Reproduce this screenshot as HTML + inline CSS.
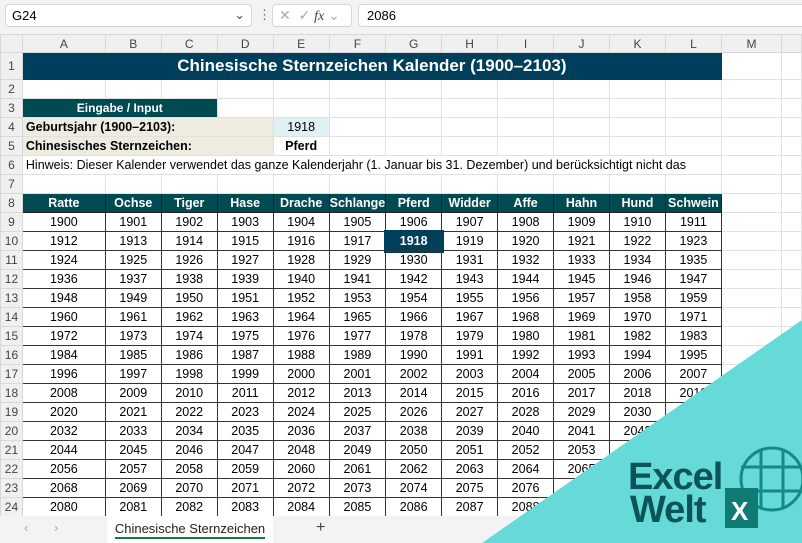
<!DOCTYPE html>
<html><head><meta charset="utf-8"><style>
*{margin:0;padding:0;box-sizing:border-box}
body{width:802px;height:543px;overflow:hidden;background:#fff;font-family:"Liberation Sans",Arial,sans-serif;position:relative}
.top{position:absolute;left:0;top:0;width:802px;height:34px;background:#f3f3f3}
.nb{position:absolute;left:5px;top:4px;width:247px;height:23px;background:#fff;border:1px solid #d6d6d6;border-radius:4px;font-size:13px;padding:3px 6px}
.fx{position:absolute;left:272px;top:4px;width:80px;height:23px;background:#fff;border:1px solid #d6d6d6;border-radius:4px;color:#aaa;font-size:14px;padding:2px 6px}
.fb{position:absolute;left:358px;top:4px;width:450px;height:23px;background:#fff;border:1px solid #d6d6d6;border-radius:4px;font-size:13px;padding:3px 8px}
table{position:absolute;left:0;top:34px;border-collapse:collapse;table-layout:fixed;font-size:12.5px}
td{height:19px;border:1px solid #e1e1e1;text-align:center;white-space:nowrap;overflow:visible;padding:0}
tr.h td{height:18px;background:#f0f0f0;color:#444;font-size:12px;border-color:#d8d8d8}
td.r{background:#f0f0f0;color:#444;font-size:12px;border-color:#d8d8d8;text-align:center}
tr.t td.ti{height:27px;background:#003f5c;color:#fff;font-weight:bold;font-size:17px;border:1px solid #003f5c}
.in{background:#004a52;color:#fff;font-weight:bold;font-size:12px}
.bg{background:#eeece1;font-weight:bold;text-align:left;padding-left:3px}
.lb{background:#dff1f2}
tr.k td.c{background:#004a52;color:#fff;font-weight:bold;border:1px solid #222}
tr.d td.c{border:1px solid #333}
td.sel{background:#003f5c!important;color:#fff;font-weight:bold;outline:2px solid #003f5c}
.tabs{position:absolute;left:0;top:516px;width:802px;height:27px;background:#f3f3f3;font-size:13px}
.tab{position:absolute;left:107px;top:0;width:166px;height:27px;background:#fff;text-align:center;padding-top:5px;color:#222}
.tab:after{content:"";position:absolute;left:8px;right:8px;bottom:4px;height:2px;background:#1a7a3c}
</style></head><body>
<div class="top">
<div class="nb">G24<span style="position:absolute;right:6px;top:2px;color:#555">⌄</span></div>
<div style="position:absolute;left:258px;top:7px;color:#666;font-size:13px">⋮</div>
<div class="fx">✕ &nbsp;✓ <i style="font-family:'Liberation Serif';color:#444">fx</i> ⌄</div>
<div class="fb">2086</div>
</div>
<table>
<colgroup><col style="width:22px"><col style="width:83px"><col span="11" style="width:56px"><col style="width:61px"><col style="width:20px"></colgroup>
<tr class="h"><td></td><td>A</td><td>B</td><td>C</td><td>D</td><td>E</td><td>F</td><td>G</td><td>H</td><td>I</td><td>J</td><td>K</td><td>L</td><td>M</td><td></td></tr>
<tr class="t"><td class="r">1</td><td class="ti" colspan="12">Chinesische Sternzeichen Kalender (1900–2103)</td><td></td><td></td></tr>
<tr><td class="r">2</td><td></td><td></td><td></td><td></td><td></td><td></td><td></td><td></td><td></td><td></td><td></td><td></td><td></td><td></td></tr>
<tr><td class="r">3</td><td class="in" colspan="3">Eingabe / Input</td><td></td><td></td><td></td><td></td><td></td><td></td><td></td><td></td><td></td><td></td><td></td></tr>
<tr><td class="r">4</td><td class="bg" colspan="4">Geburtsjahr (1900–2103):</td><td class="lb">1918</td><td></td><td></td><td></td><td></td><td></td><td></td><td></td><td></td><td></td></tr>
<tr><td class="r">5</td><td class="bg" colspan="4">Chinesisches Sternzeichen:</td><td style="font-weight:bold">Pferd</td><td></td><td></td><td></td><td></td><td></td><td></td><td></td><td></td><td></td></tr>
<tr><td class="r">6</td><td colspan="12" style="text-align:left;padding-left:3px;border-color:#e1e1e1">Hinweis: Dieser Kalender verwendet das ganze Kalenderjahr (1. Januar bis 31. Dezember) und berücksichtigt nicht das</td><td></td><td></td></tr>
<tr><td class="r">7</td><td></td><td></td><td></td><td></td><td></td><td></td><td></td><td></td><td></td><td></td><td></td><td></td><td></td><td></td></tr>
<tr class="k"><td class="r">8</td><td class="c">Ratte</td><td class="c">Ochse</td><td class="c">Tiger</td><td class="c">Hase</td><td class="c">Drache</td><td class="c">Schlange</td><td class="c">Pferd</td><td class="c">Widder</td><td class="c">Affe</td><td class="c">Hahn</td><td class="c">Hund</td><td class="c">Schwein</td><td></td><td></td></tr>
<tr class="d"><td class="r">9</td><td class="c">1900</td><td class="c">1901</td><td class="c">1902</td><td class="c">1903</td><td class="c">1904</td><td class="c">1905</td><td class="c">1906</td><td class="c">1907</td><td class="c">1908</td><td class="c">1909</td><td class="c">1910</td><td class="c">1911</td><td></td><td></td></tr>
<tr class="d"><td class="r">10</td><td class="c">1912</td><td class="c">1913</td><td class="c">1914</td><td class="c">1915</td><td class="c">1916</td><td class="c">1917</td><td class="c sel">1918</td><td class="c">1919</td><td class="c">1920</td><td class="c">1921</td><td class="c">1922</td><td class="c">1923</td><td></td><td></td></tr>
<tr class="d"><td class="r">11</td><td class="c">1924</td><td class="c">1925</td><td class="c">1926</td><td class="c">1927</td><td class="c">1928</td><td class="c">1929</td><td class="c">1930</td><td class="c">1931</td><td class="c">1932</td><td class="c">1933</td><td class="c">1934</td><td class="c">1935</td><td></td><td></td></tr>
<tr class="d"><td class="r">12</td><td class="c">1936</td><td class="c">1937</td><td class="c">1938</td><td class="c">1939</td><td class="c">1940</td><td class="c">1941</td><td class="c">1942</td><td class="c">1943</td><td class="c">1944</td><td class="c">1945</td><td class="c">1946</td><td class="c">1947</td><td></td><td></td></tr>
<tr class="d"><td class="r">13</td><td class="c">1948</td><td class="c">1949</td><td class="c">1950</td><td class="c">1951</td><td class="c">1952</td><td class="c">1953</td><td class="c">1954</td><td class="c">1955</td><td class="c">1956</td><td class="c">1957</td><td class="c">1958</td><td class="c">1959</td><td></td><td></td></tr>
<tr class="d"><td class="r">14</td><td class="c">1960</td><td class="c">1961</td><td class="c">1962</td><td class="c">1963</td><td class="c">1964</td><td class="c">1965</td><td class="c">1966</td><td class="c">1967</td><td class="c">1968</td><td class="c">1969</td><td class="c">1970</td><td class="c">1971</td><td></td><td></td></tr>
<tr class="d"><td class="r">15</td><td class="c">1972</td><td class="c">1973</td><td class="c">1974</td><td class="c">1975</td><td class="c">1976</td><td class="c">1977</td><td class="c">1978</td><td class="c">1979</td><td class="c">1980</td><td class="c">1981</td><td class="c">1982</td><td class="c">1983</td><td></td><td></td></tr>
<tr class="d"><td class="r">16</td><td class="c">1984</td><td class="c">1985</td><td class="c">1986</td><td class="c">1987</td><td class="c">1988</td><td class="c">1989</td><td class="c">1990</td><td class="c">1991</td><td class="c">1992</td><td class="c">1993</td><td class="c">1994</td><td class="c">1995</td><td></td><td></td></tr>
<tr class="d"><td class="r">17</td><td class="c">1996</td><td class="c">1997</td><td class="c">1998</td><td class="c">1999</td><td class="c">2000</td><td class="c">2001</td><td class="c">2002</td><td class="c">2003</td><td class="c">2004</td><td class="c">2005</td><td class="c">2006</td><td class="c">2007</td><td></td><td></td></tr>
<tr class="d"><td class="r">18</td><td class="c">2008</td><td class="c">2009</td><td class="c">2010</td><td class="c">2011</td><td class="c">2012</td><td class="c">2013</td><td class="c">2014</td><td class="c">2015</td><td class="c">2016</td><td class="c">2017</td><td class="c">2018</td><td class="c">2019</td><td></td><td></td></tr>
<tr class="d"><td class="r">19</td><td class="c">2020</td><td class="c">2021</td><td class="c">2022</td><td class="c">2023</td><td class="c">2024</td><td class="c">2025</td><td class="c">2026</td><td class="c">2027</td><td class="c">2028</td><td class="c">2029</td><td class="c">2030</td><td class="c">2031</td><td></td><td></td></tr>
<tr class="d"><td class="r">20</td><td class="c">2032</td><td class="c">2033</td><td class="c">2034</td><td class="c">2035</td><td class="c">2036</td><td class="c">2037</td><td class="c">2038</td><td class="c">2039</td><td class="c">2040</td><td class="c">2041</td><td class="c">2042</td><td class="c">2043</td><td></td><td></td></tr>
<tr class="d"><td class="r">21</td><td class="c">2044</td><td class="c">2045</td><td class="c">2046</td><td class="c">2047</td><td class="c">2048</td><td class="c">2049</td><td class="c">2050</td><td class="c">2051</td><td class="c">2052</td><td class="c">2053</td><td class="c">2054</td><td class="c">2055</td><td></td><td></td></tr>
<tr class="d"><td class="r">22</td><td class="c">2056</td><td class="c">2057</td><td class="c">2058</td><td class="c">2059</td><td class="c">2060</td><td class="c">2061</td><td class="c">2062</td><td class="c">2063</td><td class="c">2064</td><td class="c">2065</td><td class="c">2066</td><td class="c">2067</td><td></td><td></td></tr>
<tr class="d"><td class="r">23</td><td class="c">2068</td><td class="c">2069</td><td class="c">2070</td><td class="c">2071</td><td class="c">2072</td><td class="c">2073</td><td class="c">2074</td><td class="c">2075</td><td class="c">2076</td><td class="c">2077</td><td class="c">2078</td><td class="c">2079</td><td></td><td></td></tr>
<tr class="d"><td class="r">24</td><td class="c">2080</td><td class="c">2081</td><td class="c">2082</td><td class="c">2083</td><td class="c">2084</td><td class="c">2085</td><td class="c">2086</td><td class="c">2087</td><td class="c">2088</td><td class="c">2089</td><td class="c">2090</td><td class="c">2091</td><td></td><td></td></tr>
</table>
<div class="tabs">
<span style="position:absolute;left:24px;top:4px;color:#aaa">‹</span>
<span style="position:absolute;left:54px;top:4px;color:#aaa">›</span>
<div class="tab">Chinesische Sternzeichen</div>
<span style="position:absolute;left:316px;top:3px;color:#444;font-size:16px">+</span>
</div>
<svg style="position:absolute;left:0;top:0" width="802" height="543">
<polygon points="802,320 802,543 482,543" fill="#66d9d9"/>
<text x="628" y="489" font-family="Liberation Sans,sans-serif" font-weight="bold" font-size="38" fill="#0b5458" letter-spacing="-1">Excel</text>
<text x="630" y="522" font-family="Liberation Sans,sans-serif" font-weight="bold" font-size="38" fill="#0b5458" letter-spacing="-1">Welt</text>
<g stroke="#118a88" stroke-width="3" fill="none">
<circle cx="772" cy="479" r="31"/>
<line x1="741" y1="467" x2="802" y2="467"/><line x1="741" y1="491" x2="802" y2="491"/>
<line x1="761" y1="450" x2="761" y2="508"/><line x1="783" y1="450" x2="783" y2="508"/>
</g>
<rect x="725" y="488" width="33" height="40" fill="#0e7c74"/>
<text x="731" y="520" font-family="Liberation Sans,sans-serif" font-weight="bold" font-size="26" fill="#fff">X</text>
</svg>
</body></html>
